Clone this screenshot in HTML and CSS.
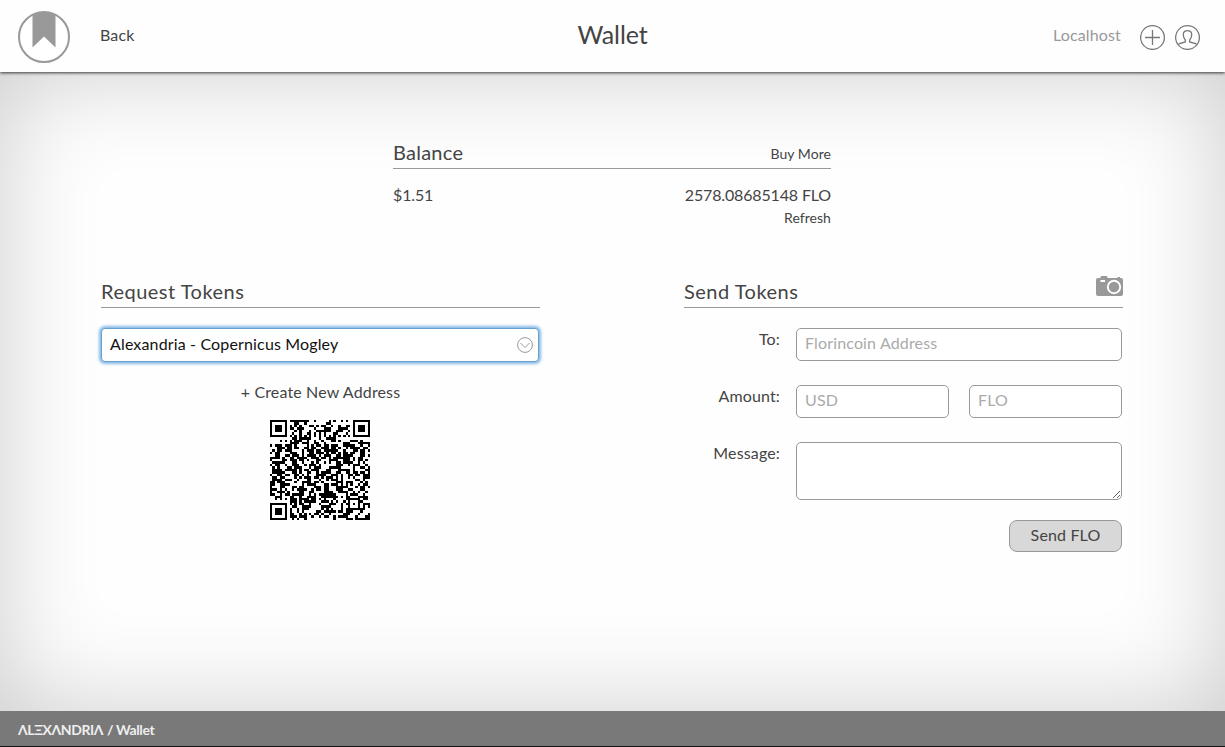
FILE: index.html
```html
<!DOCTYPE html>
<html lang="en">
<head>
<meta charset="utf-8">
<title>Wallet</title>
<link rel="stylesheet" href="styles.css">
</head>
<body>
<header class="topbar">
  <div class="side">
    <svg class="logo" width="52" height="52" viewBox="0 0 52 52"><circle cx="26" cy="26" r="25" fill="#fff" stroke="#999" stroke-width="2"/><path d="M14.500 4 Q26 -2 37.500 4 V36.500 L26 25.500 L14.500 36.500Z" fill="#999"/></svg>
    <a class="back">Back</a>
  </div>
  <h1 class="title">Wallet</h1>
  <div class="side side-right">
    <span class="host">Localhost</span>
    <svg class="plus" width="26" height="26" viewBox="0 0 26 26" fill="none" stroke="#777" stroke-width="1.3"><circle cx="12.500" cy="13.500" r="11.900"/><path d="M12.500 6V21M5 13.500H20"/></svg>
    <svg class="user" width="26" height="26" viewBox="0 0 26 26" fill="none" stroke="#777" stroke-width="1.3"><circle cx="12.500" cy="13.500" r="11.900"/><path d="M3.200 20.500L4.500 19.500L10.300 18V16C7.300 12 7.300 6.600 12.500 6.600S17.700 12 14.700 16V18L20.500 19.500L21.800 20.500"/></svg>
  </div>
</header>
<main class="content">
  <section class="balance">
    <div class="heading"><h2 class="h-balance">Balance</h2><a class="small buy">Buy More</a></div>
    <div class="amounts"><span class="usd">$1.51</span><span class="flo">2578.08685148 FLO</span></div>
    <a class="small refresh">Refresh</a>
  </section>
  <div class="columns">
    <section class="request">
      <div class="heading"><h2 class="h-request">Request Tokens</h2></div>
      <div class="select"><span class="selected">Alexandria - Copernicus Mogley</span>
        <svg width="16" height="16" viewBox="0 0 16 16" fill="none" stroke="#999"><circle cx="8" cy="8" r="7.400"/><path d="M3.500 6L8 10.500L12.500 6"/></svg>
      </div>
      <a class="create">+ Create New Address</a>
      <svg class="qr" width="100" height="100" viewBox="0 0 41 41" shape-rendering="crispEdges"><path id="modules"/></svg>
    </section>
    <section class="send">
      <div class="heading"><h2 class="h-send">Send Tokens</h2>
        <svg class="camera" width="27" height="20" viewBox="0 0 27 20"><path d="M2 2H4.500V1Q4.500 0 5.500 0H10.500Q11.500 0 11.500 1V2H21.500V1H24V2H25Q27 2 27 4V18Q27 20 25 20H2Q0 20 0 18V4Q0 2 2 2Z" fill="#999"/><rect x="4.500" y="4" width="4.500" height="2" fill="#fff"/><circle cx="18" cy="11" r="6.200" fill="#999" stroke="#fff" stroke-width="1.900"/></svg>
      </div>
      <form class="form">
        <label class="l-to">To:</label><input class="wide" placeholder="Florincoin Address">
        <label class="l-amount">Amount:</label><div class="pair"><input placeholder="USD"><input placeholder="FLO"></div>
        <label class="l-message">Message:</label><textarea></textarea>
      </form>
      <button class="submit">Send FLO</button>
    </section>
  </div>
</main>
<footer class="footer"><span class="brand">ΛLΞXΛNDRIΛ</span><span class="crumb">/ Wallet</span></footer>
<script src="qr.js"></script>
</body>
</html>
```
FILE: styles.css
```css
* { box-sizing: border-box; }
body { margin: 0; height: 747px; display: flex; flex-direction: column; overflow: hidden; background: #fefefe; color: #444; font: 16px/22px Lato, "Open Sans", sans-serif; letter-spacing: .15px; }
h1, h2 { margin: 0; font-weight: 400; }
.topbar { position: relative; z-index: 1; flex: none; height: 72px; padding: 0 24px 0 18px; display: grid; grid-template-columns: 1fr auto 1fr; background: #fefefe; box-shadow: 0 1px 3px rgba(0,0,0,.75); }
.side { display: flex; align-items: flex-start; }
.side-right { justify-content: flex-end; }
.logo { margin-top: 11px; }
.back { margin: 24px 0 0 30px; }
.title { font-size: 25px; line-height: 30px; letter-spacing: -.1px; margin-top: 19px; padding-left: 6px; }
.host { color: #999; margin: 24px 19px 0 0; }
.plus, .user { margin-top: 24px; }
.user { margin-left: 9px; }
.content { flex: 1; padding: 68px 102px 0 101px; box-shadow: inset 0 0 100px rgba(0,0,0,.2); }
.balance { width: 438px; margin-left: 292px; height: 139px; display: flex; flex-direction: column; }
.heading { height: 29px; border-bottom: 1px solid #999; display: flex; justify-content: space-between; }
h2 { font-size: 20px; line-height: 24px; letter-spacing: .25px; }
.h-request, .h-send { letter-spacing: .5px; }
.small { font-size: 14px; line-height: 20px; letter-spacing: .05px; }
.buy { margin-top: 4px; }
.amounts { display: flex; justify-content: space-between; margin-top: 15px; letter-spacing: -.15px; }
.refresh { align-self: flex-end; margin-top: 2px; }
.columns { display: flex; justify-content: space-between; }
.request, .send { width: 439px; display: flex; flex-direction: column; }
.select { width: 438px; margin-top: 20px; height: 34px; border: 1px solid #68a0d0; border-radius: 4px; background: #fff; box-shadow: 0 0 3px 2px #86b8e6; display: flex; align-items: center; justify-content: space-between; padding: 0 5px 2px 8px; color: #111; }
.select svg { margin-top: 2px; }
.create { align-self: center; margin-top: 19px; }
.qr { align-self: center; margin: 17px 1px 0 0; }
.camera { margin-top: -3px; }
.form { margin: 20px 1px 0 0; display: grid; grid-template-columns: 96px 326px; column-gap: 16px; row-gap: 24px; }
label { text-align: right; }
input, textarea { width: 100%; height: 33px; border: 1px solid #999; border-radius: 5px; background: #fff; padding: 0 8px 4px; font: inherit; letter-spacing: inherit; margin: 0; display: block; outline: 0; }
textarea { height: 58px; }
input::placeholder { color: #aaa; }
.pair { display: grid; grid-template-columns: 153px 153px; gap: 20px; }
.submit { align-self: flex-end; width: 113px; height: 32px; margin: 20px 1px 0 0; padding: 0 0 2px; border: 1px solid #999; border-radius: 8px; background: #d8d8d8; color: #444; font: inherit; letter-spacing: inherit; }
.footer { flex: none; height: 36px; padding: 9px 18px 0; background: #797979; border-bottom: 1px solid #111; color: #eee; font-size: 14px; line-height: 20px; font-weight: 700; letter-spacing: -.4px; display: flex; gap: 4px; }
```
FILE: qr.js
```js
const N = 41;
let seed = 8191;
const random = () => (seed = (seed * 48271) % 2147483647) / 2147483647;
const ring = (x, y, cx, cy) => Math.max(Math.abs(x - cx), Math.abs(y - cy));
let d = "";
for (let y = 0; y < N; y++) {
  for (let x = 0; x < N; x++) {
    let on = random() < 0.5;
    if (y === 6) on = x % 2 === 0;
    if (x === 6) on = y % 2 === 0;
    for (const [cx, cy] of [[3, 3], [37, 3], [3, 37]]) {
      const r = ring(x, y, cx, cy);
      if (r <= 4) on = r !== 2 && r !== 4;
    }
    const a = ring(x, y, 34, 34);
    if (a <= 2) on = a !== 1;
    if (on) d += `M${x} ${y}h1v1h-1z`;
  }
}
document.getElementById("modules").setAttribute("d", d);
```
